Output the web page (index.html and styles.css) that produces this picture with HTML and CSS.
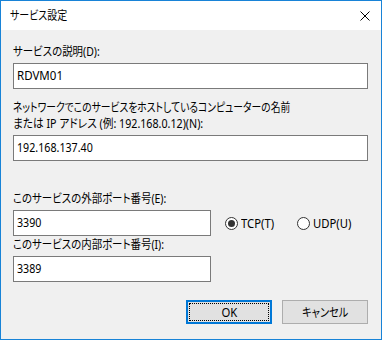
FILE: index.html
```html
<!DOCTYPE html>
<html lang="ja">
<head>
  <meta charset="UTF-8" />
  <title>サービス設定</title>
  <link rel="stylesheet" href="styles.css">
</head>
<body>

<div class="window">
  <!-- Title bar -->
  <div class="titlebar">
    <span class="title">サービス設定</span>
    <svg class="close" width="10" height="10" viewBox="0 0 10 10">
      <path d="M0.5 0.5 L9.5 9.5 M9.5 0.5 L0.5 9.5" stroke="#000" stroke-width="1" fill="none"/>
    </svg>
  </div>

  <div class="content">
    <label class="label"><span class="txt s87">サービスの説明(D):</span></label>
    <div class="input"><span class="txt s96">RDVM01</span></div>

    <label class="label label-2">
      <span class="txt s815">ネットワークでこのサービスをホストしているコンピューターの名前</span>
      <span class="txt s89">または IP アドレス (例: 192.168.0.12)(N):</span>
    </label>
    <div class="input"><span class="txt s89">192.168.137.40</span></div>

    <label class="label label-3"><span class="txt s87">このサービスの外部ポート番号(E):</span></label>
    <div class="port-row">
      <div class="input port"><span class="txt s89">3390</span></div>
      <div class="radio checked"><span class="dot"></span><span class="txt s94">TCP(T)</span></div>
      <div class="radio"><span class="dot"></span><span class="txt s94">UDP(U)</span></div>
    </div>

    <label class="label label-4"><span class="txt s87">このサービスの内部ポート番号(I):</span></label>
    <div class="input port"><span class="txt s89">3389</span></div>

    <div class="buttons">
      <button class="btn default"><span class="focus"><span class="txt s94 mid">OK</span></span></button>
      <button class="btn"><span class="txt s85 mid">キャンセル</span></button>
    </div>
  </div>
</div>

</body>
</html>
```

FILE: styles.css
```css
* { margin: 0; padding: 0; box-sizing: border-box; }

body {
  font-family: "Noto Sans", "Noto Sans CJK JP", sans-serif;
  font-size: 12px;
  color: #000;
  background: #fff;
}

.window {
  width: 382px;
  height: 340px;
  border: 1px solid #1883d7;
  background: #f0f0f0;
  display: flex;
  flex-direction: column;
}

.titlebar {
  height: 29px;
  background: #fff;
  display: flex;
  align-items: center;
  justify-content: space-between;
  padding: 0 11px 0 9px;
}

.title {
  font-feature-settings: "palt";
  line-height: 16px;
  display: inline-block;
  transform: scaleX(.83);
  transform-origin: left center;
}

.close {
  display: block;
}

.content {
  padding: 14px 13px 0 12px;
  display: flex;
  flex-direction: column;
  align-items: flex-start;
  font-feature-settings: "palt";
}

/* Yu Gothic UI is narrower than Noto, so texts are squeezed a little */
.txt {
  display: inline-block;
  white-space: nowrap;
  transform-origin: left center;
}
.txt.mid { transform-origin: center center; }
.s815 { transform: scaleX(.815); }
.s85 { transform: scaleX(.85); }
.s87 { transform: scaleX(.87); }
.s89 { transform: scaleX(.89); }
.s94 { transform: scaleX(.94); }
.s96 { transform: scaleX(.96); }

.label {
  display: block;
  line-height: 16px;
  margin-bottom: 3px;
  white-space: nowrap;
}

.label .txt { display: block; width: max-content; }

.label-2 { margin-top: 11px; }
.label-3 { margin-top: 30px; }
.label-4 { margin-top: 1px; }

.input {
  width: 100%;
  height: 26px;
  background: #fff;
  border: 1px solid #7a7a7a;
  padding: 0 3px;
  line-height: 24px;
}

.port-row {
  display: flex;
  align-items: center;
  width: 100%;
}

.input.port {
  width: 198px;
}

.radio {
  display: flex;
  align-items: center;
  margin-left: 14px;
  margin-right: 7px;
}

.dot {
  width: 13px;
  height: 13px;
  border: 1px solid #333;
  border-radius: 50%;
  background: #fff;
  margin-right: 3px;
  display: flex;
  align-items: center;
  justify-content: center;
}

.radio.checked .dot::after {
  content: "";
  width: 7px;
  height: 7px;
  border-radius: 50%;
  background: #333;
}

.buttons {
  display: flex;
  gap: 10px;
  align-self: flex-end;
  margin-top: 18px;
}

.btn {
  width: 86px;
  height: 24px;
  background: #e1e1e1;
  border: 1px solid #adadad;
  font-family: inherit;
  font-size: 12px;
  font-feature-settings: "palt";
  color: #000;
}

.btn.default {
  border: 2px solid #0078d7;
  padding: 1px;
}

.focus {
  display: flex;
  align-items: center;
  justify-content: center;
  height: 100%;
  outline: 1px dotted #000;
  outline-offset: -1px;
}
```
